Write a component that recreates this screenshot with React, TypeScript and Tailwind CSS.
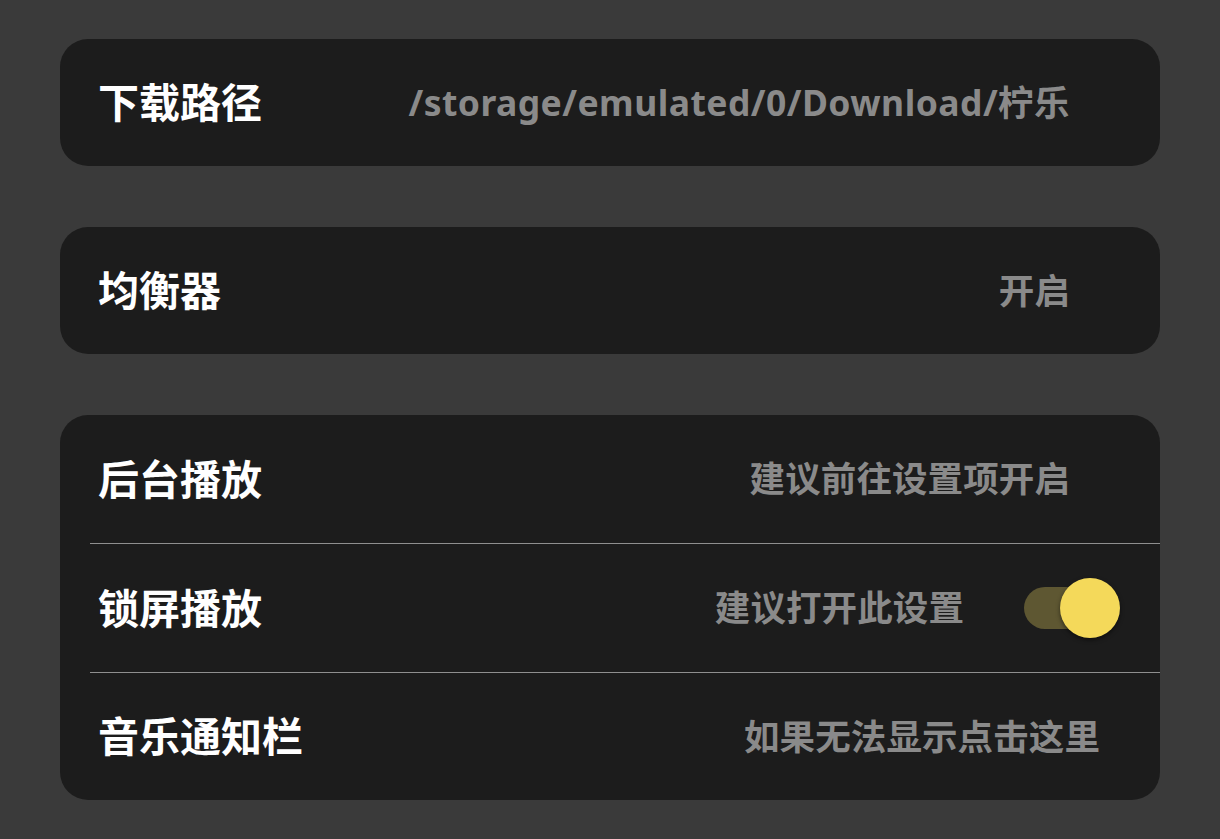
import React from "react";

const font = { fontFamily: '"Noto Sans", "Noto Sans CJK SC", sans-serif' };

function Row({ label, value, pr = "pr-[92px]", h = "h-[127px]", vc = "tracking-[0.1px]", children }: { label: string; value: string; pr?: string; h?: string; vc?: string; children?: React.ReactNode }) {
  return (
    <div className={`flex ${h} items-center justify-between pl-[38px] ${pr}`}>
      <span className="text-[41px] font-bold leading-none text-white">{label}</span>
      <div className="flex items-center">
        <span className={`text-[35.5px] font-bold leading-none text-[#8a8a8a] ${vc}`}>{value}</span>
        {children}
      </div>
    </div>
  );
}

export default function App() {
  return (
    <div className="flex h-[839px] w-[1220px] flex-col gap-[61px] bg-[#3a3a3a] px-[60px] pt-[39px]" style={font}>
      <div className="overflow-hidden rounded-[28px] bg-[#1c1c1c]">
        <Row label="下载路径" value="/storage/emulated/0/Download/柠乐" pr="pr-[90px]" vc="tracking-[0.45px]" />
      </div>
      <div className="overflow-hidden rounded-[28px] bg-[#1c1c1c]">
        <Row label="均衡器" value="开启" pr="pr-[90px]" />
      </div>
      <div className="overflow-hidden rounded-[28px] bg-[#1c1c1c]">
        <Row label="后台播放" value="建议前往设置项开启" h="h-[128px]" pr="pr-[90px]" />
        <div className="ml-[30px] h-px bg-[#8f8f8f]" />
        <Row label="锁屏播放" value="建议打开此设置" pr="pr-[40px]" h="h-[128px]">
          <div className="relative ml-[60px] h-[60px] w-[96px]">
            <div className="absolute left-0 top-[9px] h-[42px] w-[80px] rounded-full bg-[#5e5732]" />
            <div className="absolute right-0 top-0 h-[60px] w-[60px] rounded-full bg-[#f4d95a] shadow-[0_2px_4px_rgba(0,0,0,0.5)]" />
          </div>
        </Row>
        <div className="ml-[30px] h-px bg-[#8f8f8f]" />
        <Row label="音乐通知栏" value="如果无法显示点击这里" pr="pr-[60px]" />
      </div>
    </div>
  );
}
